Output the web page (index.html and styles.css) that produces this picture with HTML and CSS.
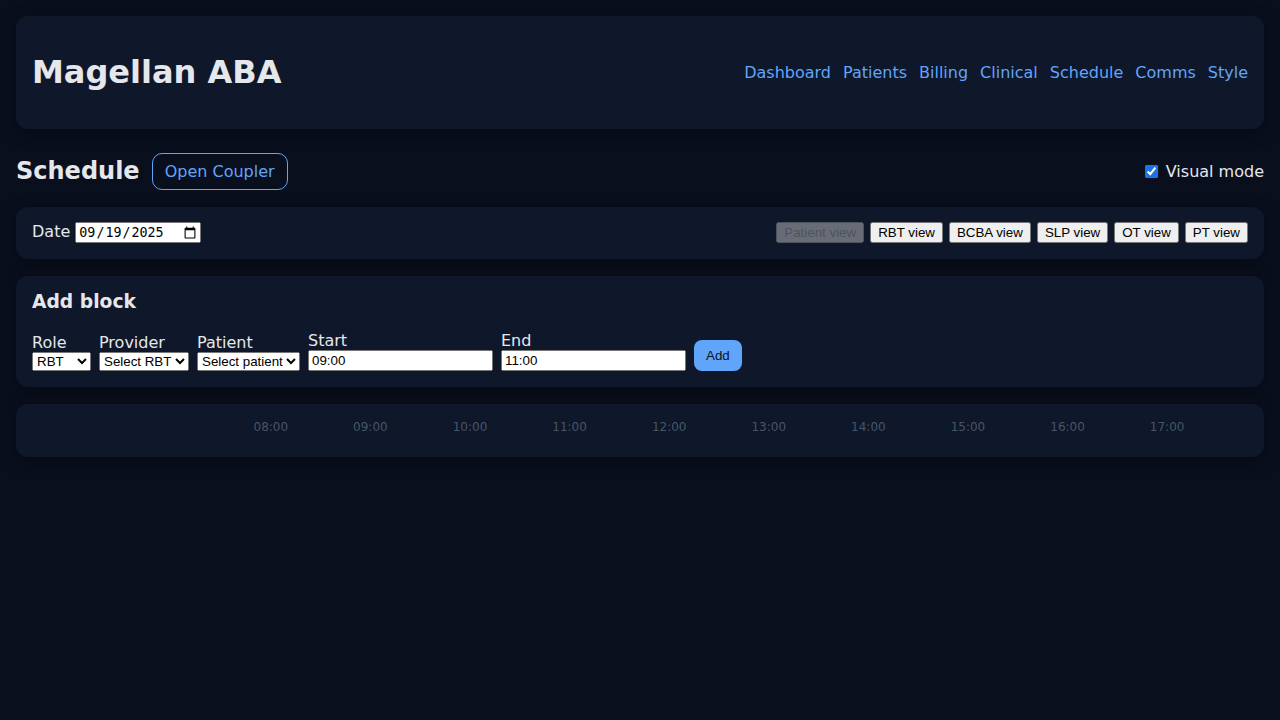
FILE: index.html
```html
<!DOCTYPE html>
<html>
<head>
<meta charset="utf-8">
<title>Magellan ABA</title>
<link rel="stylesheet" href="styles.css">
</head>
<body>
<div class="app">
  <header class="card topbar">
    <h1 class="brand">Magellan ABA</h1>
    <nav class="nav">
      <a href="#">Dashboard</a>
      <a href="#">Patients</a>
      <a href="#">Billing</a>
      <a href="#">Clinical</a>
      <a href="#">Schedule</a>
      <a href="#">Comms</a>
      <a href="#">Style</a>
    </nav>
  </header>

  <div class="page-head">
    <div class="title-group">
      <h2 class="page-title">Schedule</h2>
      <button class="btn-outline">Open Coupler</button>
    </div>
    <label class="toggle"><input type="checkbox" checked> Visual mode</label>
  </div>

  <section class="card toolbar">
    <label class="date-label">Date <input type="date" value="2025-09-19"></label>
    <div class="views">
      <button disabled>Patient view</button>
      <button>RBT view</button>
      <button>BCBA view</button>
      <button>SLP view</button>
      <button>OT view</button>
      <button>PT view</button>
    </div>
  </section>

  <section class="card add-card">
    <h3 class="section-title">Add block</h3>
    <div class="form-row">
      <label class="field">Role
        <select><option>RBT</option><option>BCBA</option><option>SLP</option><option>OT</option><option>PT</option></select>
      </label>
      <label class="field">Provider
        <select><option>Select RBT</option></select>
      </label>
      <label class="field">Patient
        <select><option>Select patient</option></select>
      </label>
      <label class="field">Start
        <input type="text" class="time-input" value="09:00">
      </label>
      <label class="field">End
        <input type="text" class="time-input" value="11:00">
      </label>
      <button class="btn-primary">Add</button>
    </div>
  </section>

  <section class="card timeline">
    <div class="hours">
      <span class="hours-spacer"></span>
      <span>08:00</span><span>09:00</span><span>10:00</span><span>11:00</span><span>12:00</span>
      <span>13:00</span><span>14:00</span><span>15:00</span><span>16:00</span><span>17:00</span>
    </div>
  </section>
</div>
</body>
</html>
```

FILE: styles.css
```css
html, body {
  margin: 0;
  padding: 0;
  background: #0a0f1d;
  color: #e5e7eb;
  font-family: "DejaVu Sans", sans-serif;
  font-size: 16px;
}

.app {
  padding: 16px;
  display: flex;
  flex-direction: column;
}

.card {
  background: #0f172a;
  border-radius: 12px;
  padding: 16px;
  box-shadow: 0 4px 16px rgba(0, 0, 0, 0.35);
}

.topbar {
  display: flex;
  align-items: center;
  justify-content: space-between;
}

.brand {
  margin: 21.44px 0;
  font-size: 32px;
  font-weight: bold;
  color: #e5e7eb;
}

.nav {
  display: flex;
  gap: 12px;
}

.nav a {
  color: #60a5fa;
  text-decoration: none;
  font-size: 16px;
}

.page-head {
  display: flex;
  align-items: center;
  justify-content: space-between;
  margin: 24px 0 17px;
}

.title-group {
  display: flex;
  align-items: center;
  gap: 12px;
}

.page-title {
  margin: 0;
  font-size: 24px;
  font-weight: bold;
}

.btn-outline {
  background: transparent;
  border: 1px solid #60a5fa;
  color: #60a5fa;
  border-radius: 10px;
  padding: 8px 12px;
  font-family: "DejaVu Sans", sans-serif;
  font-size: 16px;
  line-height: 19px;
}

.toggle {
  display: flex;
  align-items: center;
  gap: 5px;
  font-size: 16px;
}

.toggle input {
  margin: 3px 3px 3px 4px;
  accent-color: #1a73e8;
}

.toolbar {
  display: flex;
  align-items: center;
  justify-content: space-between;
  margin-bottom: 17px;
  padding-top: 15px;
  padding-bottom: 16px;
}

.date-label {
  font-size: 16px;
}

.views {
  display: flex;
  gap: 6px;
}

.add-card {
  margin-bottom: 17px;
}

.section-title {
  margin: 0 0 19px;
  font-size: 18.72px;
  font-weight: bold;
  line-height: 20px;
}

.form-row {
  display: flex;
  align-items: flex-end;
  gap: 8px;
}

.field {
  display: flex;
  flex-direction: column;
  font-size: 16px;
  line-height: 19px;
}

.time-input {
  width: 177px;
}

.btn-primary {
  background: #60a5fa;
  color: #0b1220;
  border: none;
  border-radius: 8px;
  padding: 8px 12px;
  font-family: "Liberation Sans", Arial, sans-serif;
  font-size: 13.33px;
  line-height: 15px;
}

.timeline {
  padding-bottom: 23px;
}

.hours {
  display: grid;
  grid-template-columns: 189px repeat(10, 99.6px);
  font-size: 12px;
  line-height: 14px;
  color: #475569;
  text-align: center;
}
```
